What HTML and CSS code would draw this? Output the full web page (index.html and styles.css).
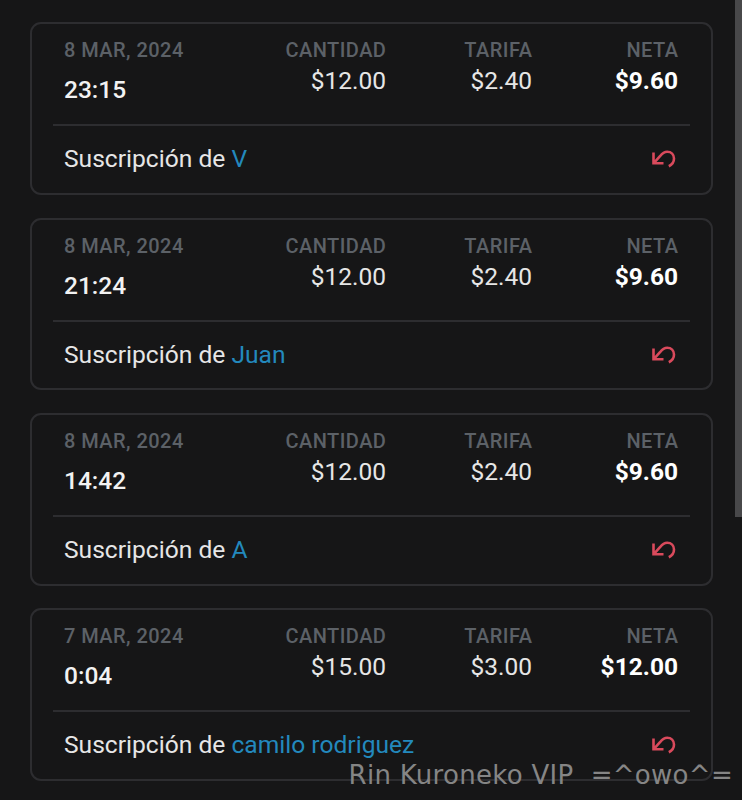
FILE: index.html
```
<!DOCTYPE html>
<html lang="es">
<head>
    <meta charset="UTF-8">
    <meta name="viewport" content="width=device-width, initial-scale=1.0">
    <title>Ganancias</title>
    <link rel="stylesheet" href="styles.css">
</head>
<body>
    <svg width="0" height="0" class="defs">
        <symbol id="undo" viewBox="0 0 24 18">
            <path d="M1.5 2.5V13.3H11.5M1.5 13.3L8 6.2C10.3 3.2 12.2 1.7 15.2 1.7C19.2 1.7 22 4.7 22 8.6C22 12.2 20 14.8 16.8 16.3"/>
        </symbol>
    </svg>

    <div class="list">
        <div class="card">
            <div class="summary">
                <div class="date"><span class="label">8 MAR, 2024</span><span class="time">23:15</span></div>
                <div class="col"><span class="label">CANTIDAD</span><span class="value">$12.00</span></div>
                <div class="col"><span class="label">TARIFA</span><span class="value">$2.40</span></div>
                <div class="col"><span class="label">NETA</span><span class="value net">$9.60</span></div>
            </div>
            <div class="detail">
                <p>Suscripción de <a class="user">V</a></p>
                <svg class="undo"><use href="#undo"/></svg>
            </div>
        </div>

        <div class="card">
            <div class="summary">
                <div class="date"><span class="label">8 MAR, 2024</span><span class="time">21:24</span></div>
                <div class="col"><span class="label">CANTIDAD</span><span class="value">$12.00</span></div>
                <div class="col"><span class="label">TARIFA</span><span class="value">$2.40</span></div>
                <div class="col"><span class="label">NETA</span><span class="value net">$9.60</span></div>
            </div>
            <div class="detail">
                <p>Suscripción de <a class="user">Juan</a></p>
                <svg class="undo"><use href="#undo"/></svg>
            </div>
        </div>

        <div class="card">
            <div class="summary">
                <div class="date"><span class="label">8 MAR, 2024</span><span class="time">14:42</span></div>
                <div class="col"><span class="label">CANTIDAD</span><span class="value">$12.00</span></div>
                <div class="col"><span class="label">TARIFA</span><span class="value">$2.40</span></div>
                <div class="col"><span class="label">NETA</span><span class="value net">$9.60</span></div>
            </div>
            <div class="detail">
                <p>Suscripción de <a class="user">A</a></p>
                <svg class="undo"><use href="#undo"/></svg>
            </div>
        </div>

        <div class="card">
            <div class="summary">
                <div class="date"><span class="label">7 MAR, 2024</span><span class="time">0:04</span></div>
                <div class="col"><span class="label">CANTIDAD</span><span class="value">$15.00</span></div>
                <div class="col"><span class="label">TARIFA</span><span class="value">$3.00</span></div>
                <div class="col"><span class="label">NETA</span><span class="value net">$12.00</span></div>
            </div>
            <div class="detail">
                <p>Suscripción de <a class="user">camilo rodriguez</a></p>
                <svg class="undo"><use href="#undo"/></svg>
            </div>
        </div>
    </div>

    <div class="scrollbar"></div>
    <div class="watermark">Rin Kuroneko VIP  =^owo^=</div>
</body>
</html>
```

FILE: styles.css
```
* {
    box-sizing: border-box;
}

body {
    margin: 0;
    height: 800px;
    position: relative;
    overflow: hidden;
    background-color: #161617;
    color: #e6e6e6;
    font-family: Roboto, sans-serif;
}

.defs {
    position: absolute;
}

/* Transaction cards */
.list {
    display: flex;
    flex-direction: column;
    gap: 22.3px;
    padding: 22.3px 29px 0 30px;
}

.card {
    height: 172.8px;
    margin-bottom: 0.2px;
    flex-shrink: 0;
    border: 2px solid #2d2d30;
    border-radius: 11px;
    padding: 0 21px;
}

.summary {
    display: grid;
    grid-template-columns: 1fr 146px 146px 146px;
    height: 102px;
    padding: 14px 12px 0 11px;
    border-bottom: 2px solid #2d2d30;
}

.date,
.col {
    display: flex;
    flex-direction: column;
    white-space: nowrap;
}

.col {
    align-items: flex-end;
}

.label {
    color: #5c6167;
    font-size: 20px;
    font-weight: 500;
    line-height: 24px;
    letter-spacing: 0.45px;
}

.col .label {
    margin-right: -0.4px;
}

.time {
    margin-top: 14px;
    font-size: 24.5px;
    font-weight: 500;
    line-height: 28px;
    color: #f2f2f2;
}

.value {
    margin-top: 5px;
    font-size: 24.5px;
    line-height: 28px;
}

.net {
    font-weight: 700;
    color: #fff;
}

.detail {
    display: flex;
    justify-content: space-between;
    align-items: center;
    height: 66px;
    padding: 0 14px 0 11px;
}

.detail p {
    margin: 0;
    font-size: 24.6px;
    line-height: 28px;
}

.user {
    color: #2389bd;
}

.undo {
    width: 24px;
    height: 18px;
    fill: none;
    stroke: #d94a5c;
    stroke-width: 2.6;
}

/* Overlays */
.scrollbar {
    position: absolute;
    top: 0;
    right: 0;
    width: 7px;
    height: 517px;
    background-color: #48484a;
}

.watermark {
    position: absolute;
    right: 9px;
    bottom: 10px;
    font-family: "DejaVu Sans", sans-serif;
    font-size: 26px;
    line-height: 30px;
    letter-spacing: 0.3px;
    white-space: pre;
    color: #858585;
}
```
